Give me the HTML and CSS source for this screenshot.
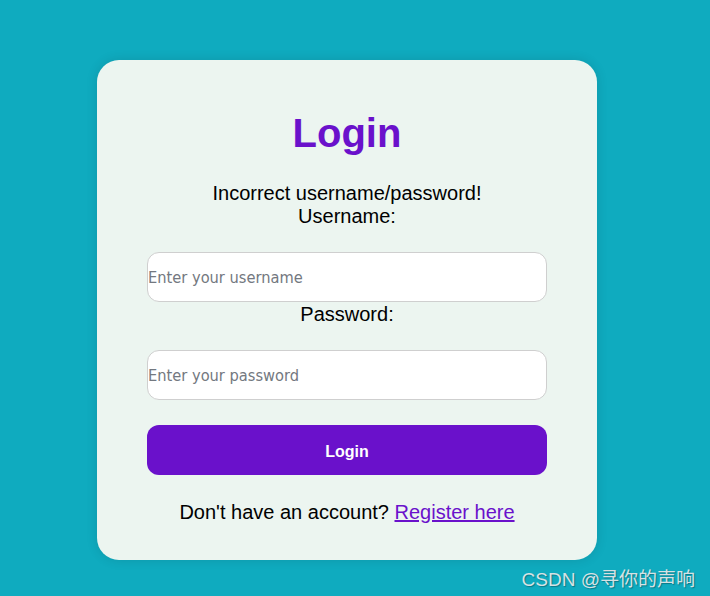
FILE: index.html
```html
<!DOCTYPE html>
<html lang="en">
<head>
<meta charset="utf-8">
<title>Login</title>
<link rel="stylesheet" href="styles.css">
</head>
<body>
<div class="page">
  <form class="card">
    <h1 class="title">Login</h1>
    <div class="error">Incorrect username/password!</div>
    <label class="label" for="u">Username:</label>
    <input class="field" id="u" type="text" placeholder="Enter your username">
    <label class="label" for="p">Password:</label>
    <input class="field" id="p" type="password" placeholder="Enter your password">
    <button class="btn" type="button">Login</button>
    <p class="foot">Don't have an account? <a class="link" href="#">Register here</a></p>
  </form>
</div>
<div class="watermark">CSDN @寻你的声响</div>
</body>
</html>
```

FILE: styles.css
```css
html, body {
  margin: 0;
  height: 100%;
}
body {
  background: #0fabbf;
  font-family: "Liberation Sans", Arial, sans-serif;
  overflow: hidden;
}
.page {
  display: flex;
  padding: 60px 0 0 97px;
}
.card {
  box-sizing: border-box;
  width: 500px;
  height: 500px;
  background: #ecf5f0;
  border-radius: 22px;
  box-shadow: 0 0 12px rgba(0, 0, 0, 0.12);
  padding: 50px 50px 0;
  display: flex;
  flex-direction: column;
  text-align: center;
}
.title {
  margin: 0 0 26px;
  font-size: 40px;
  font-weight: bold;
  color: #6a11cb;
  line-height: 46px;
}
.error, .label {
  font-size: 20px;
  line-height: 23px;
  color: #000;
}
.label {
  display: block;
}
.field {
  box-sizing: border-box;
  width: 400px;
  height: 50px;
  margin: 24px 0 1px;
  padding: 0;
  border: 1px solid #cfcfcf;
  border-radius: 12px;
  background: #fff;
  font-family: "DejaVu Sans Condensed", "DejaVu Sans", sans-serif;
  font-size: 16.3px;
  color: #000;
  outline: none;
}
.field::placeholder {
  color: #737880;
}
.btn {
  box-sizing: border-box;
  width: 400px;
  height: 50px;
  margin-top: 24px;
  padding: 3px 0 0;
  border: none;
  border-radius: 12px;
  background: #6a11cb;
  color: #fff;
  font-family: "Liberation Sans", Arial, sans-serif;
  font-size: 16px;
  font-weight: bold;
  cursor: pointer;
}
.foot {
  margin: 26px 0 0;
  font-size: 20px;
  line-height: 23px;
  color: #000;
}
.link {
  color: #6a11cb;
  text-decoration: underline;
}
.watermark {
  position: absolute;
  right: 15px;
  top: 564px;
  font-family: "Liberation Sans", "Noto Sans CJK SC", sans-serif;
  font-size: 19px;
  color: #d6e2e4;
  text-shadow: 1px 1px 1px rgba(0, 0, 0, 0.3);
}
```
